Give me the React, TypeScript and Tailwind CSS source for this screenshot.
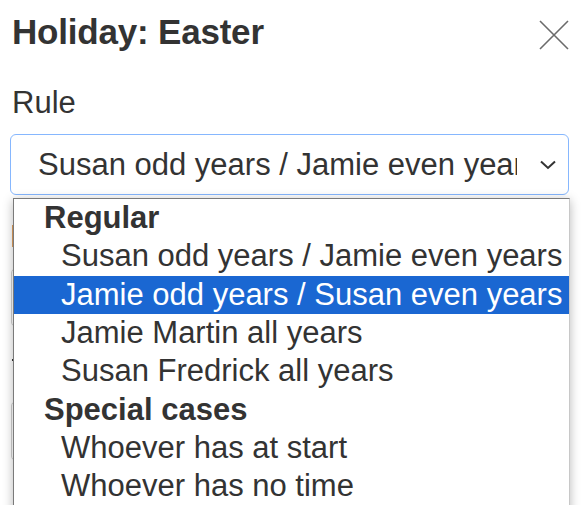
import React from "react";

const options: { label: string; group?: boolean; selected?: boolean }[] = [
  { label: "Regular", group: true },
  { label: "Susan odd years / Jamie even years" },
  { label: "Jamie odd years / Susan even years", selected: true },
  { label: "Jamie Martin all years" },
  { label: "Susan Fredrick all years" },
  { label: "Special cases", group: true },
  { label: "Whoever has at start" },
  { label: "Whoever has no time" },
];

export default function App() {
  return (
    <div className="relative w-[583px] h-[505px] overflow-hidden bg-white text-[#333] font-['Liberation_Sans',Arial,sans-serif]">
      <div className="pl-[12px] pr-[14px]">
        <div className="flex items-start justify-between">
          <h1 className="mt-[14px] text-[35px] leading-[35px] font-bold tracking-[-0.2px]">Holiday: Easter</h1>
          <svg className="mt-[20px]" width="30" height="30" viewBox="0 0 30 30">
            <path d="M1 1 L29 29 M29 1 L1 29" stroke="#6b6b6b" strokeWidth="1.6" fill="none" />
          </svg>
        </div>
        <div className="mt-[37px] text-[31px] leading-[31px]">Rule</div>
        <div className="mt-[16px] -ml-[2px] h-[61px] w-[559px] rounded-[6px] border-[1.5px] border-[#86b7fe] flex items-center pl-[27px] pr-[10px]">
          <div className="w-[479px] overflow-hidden whitespace-nowrap text-[31px] leading-[38px]">
            Susan odd years / Jamie even years
          </div>
          <svg className="ml-auto mr-[1px]" width="18" height="10" viewBox="0 0 18 10">
            <path d="M2 1.5 L9 8 L16 1.5" stroke="#333" strokeWidth="2" fill="none" />
          </svg>
        </div>
        {/* content hidden beneath the open list */}
        <div className="mt-[30px] h-[22px] w-[30px] border-l border-[#e0a060]"></div>
        <div className="mt-[21px] -ml-[1px] h-[59px] w-[558px] rounded-[5px] border border-[#cfcfcf]"></div>
        <div className="mt-[32px] h-[2px] w-[20px] bg-[#333]"></div>
        <div className="mt-[40px] -ml-[1px] h-[60px] w-[558px] rounded-[5px] border border-[#cfcfcf]"></div>
      </div>

      <div className="absolute left-[13px] top-[198px] w-[557px] h-[340px] bg-white border border-[#7a7a7a] border-r-[#c8c8c8] shadow-[0_2px_10px_rgba(0,0,0,0.28)] overflow-hidden">
        {options.map((o) => (
          <div
            key={o.label}
            className={
              "h-[38.33px] whitespace-nowrap text-[31px] leading-[38.33px] " +
              (o.group
                ? "pl-[30px] font-bold text-[#333]"
                : o.selected
                ? "pl-[47px] bg-[#1a67d2] text-white"
                : "pl-[47px] text-[#333]")
            }
          >
            {o.label}
          </div>
        ))}
      </div>
    </div>
  );
}
